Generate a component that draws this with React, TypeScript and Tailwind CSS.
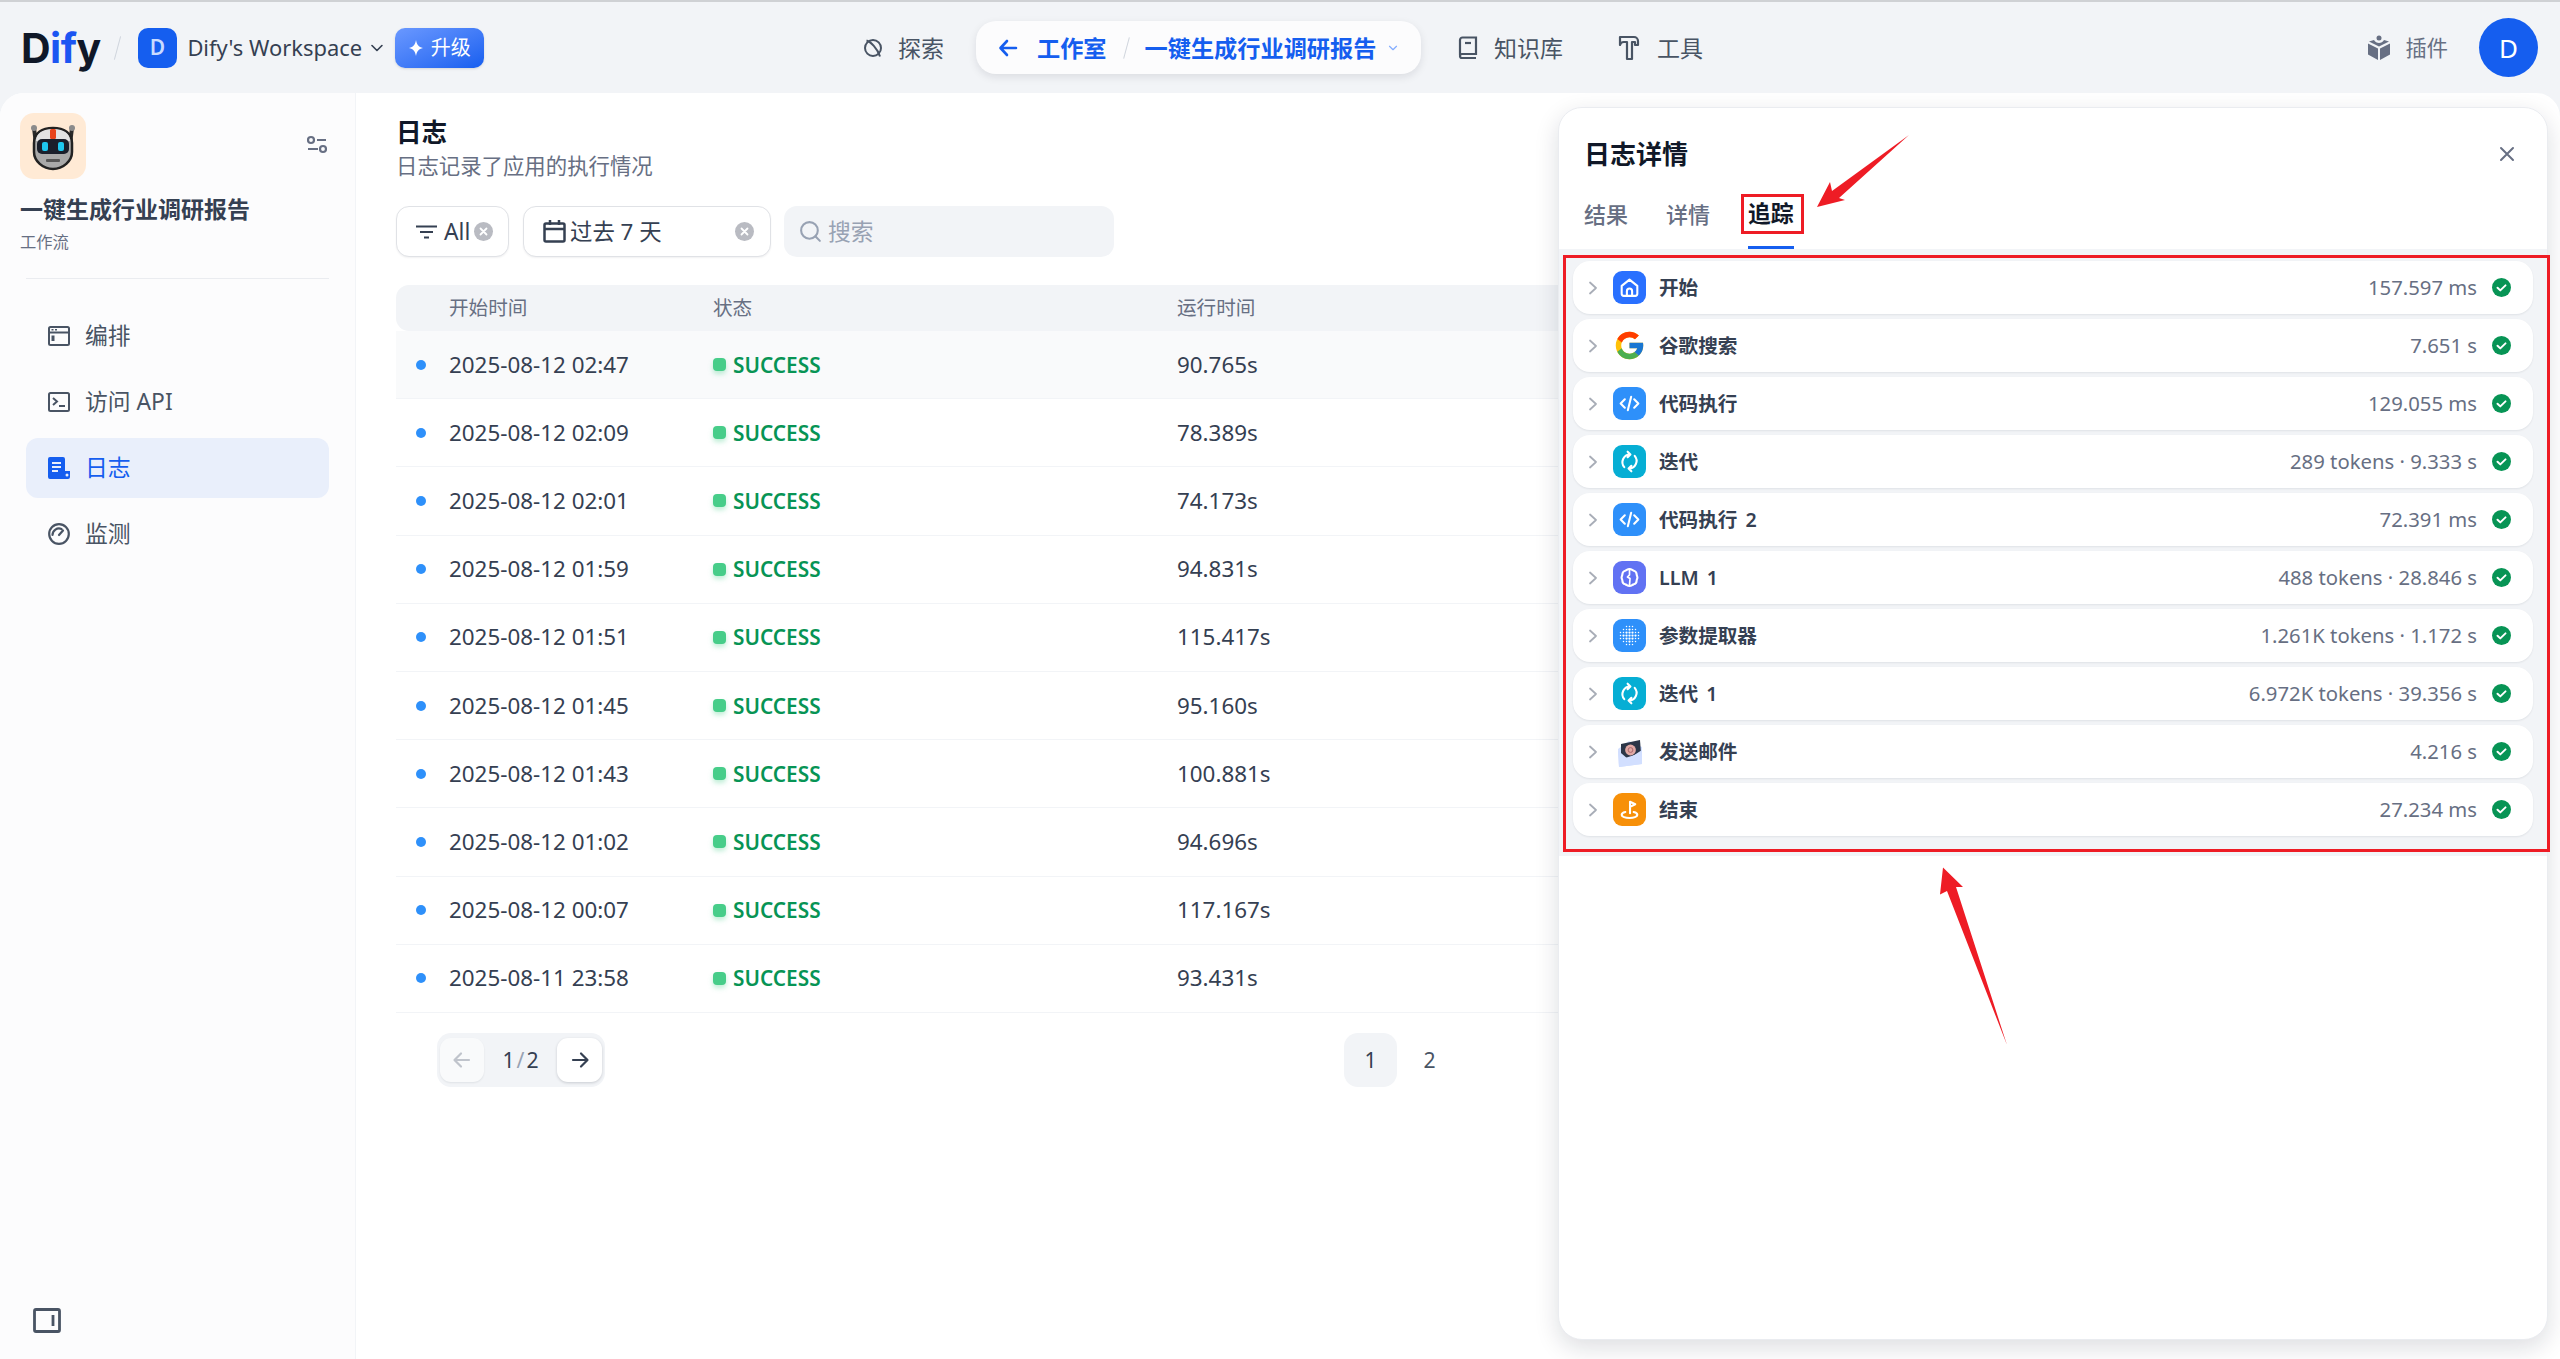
import React from "react";
import { FcGoogle } from "react-icons/fc";
import { Search, ChevronDown } from "lucide-react";

const logs = [
  ["2025-08-12 02:47", "90.765s"],
  ["2025-08-12 02:09", "78.389s"],
  ["2025-08-12 02:01", "74.173s"],
  ["2025-08-12 01:59", "94.831s"],
  ["2025-08-12 01:51", "115.417s"],
  ["2025-08-12 01:45", "95.160s"],
  ["2025-08-12 01:43", "100.881s"],
  ["2025-08-12 01:02", "94.696s"],
  ["2025-08-12 00:07", "117.167s"],
  ["2025-08-11 23:58", "93.431s"],
];

const IconBox = ({ cls, children }: { cls: string; children: React.ReactNode }) => (
  <div className={`flex h-[33px] w-[33px] shrink-0 items-center justify-center rounded-[9px] ${cls}`}>
    <svg width="25" height="25" viewBox="0 0 24 24" fill="none" stroke="#fff" strokeWidth="2" strokeLinecap="round" strokeLinejoin="round">
      {children}
    </svg>
  </div>
);

const CodeIcon = () => (
  <IconBox cls="bg-[#2e90fa]">
    <path d="M7.5 8 3.500 12l4 4M16.500 8l4 4-4 4M13.600 5.500l-3.200 13" />
  </IconBox>
);

const IterIcon = () => (
  <IconBox cls="bg-[#06aed4]">
    <path d="M12.500 5.200A7.400 7.400 0 0 0 7 17.400M10.200 2.600l2.700 2.600-2.700 2.700M11.500 18.800A7.400 7.400 0 0 0 17 6.600M13.800 21.400l-2.700-2.600 2.700-2.700" />
  </IconBox>
);

const dots: [number, number][] = [];
for (let y = -3; y <= 3; y++) {
  for (let x = -3; x <= 3; x++) {
    if (Math.abs(x) + Math.abs(y) <= 4) dots.push([x, y]);
  }
}

const MailIcon = () => (
  <svg width="33" height="33" viewBox="0 0 33 33" className="shrink-0">
    <path d="M5 14 16 6l13 6v17L6 32z" fill="#d2dfff" />
    <path d="M8 9 27 5l1 13-16 5-4-3z" fill="#2b3648" />
    <circle cx="17.500" cy="15" r="5.400" fill="#e0a8a4" />
    <circle cx="17.500" cy="15" r="2.400" fill="none" stroke="#a9666c" strokeWidth="1" />
    <path d="M5 15.500 15 24l14-9v14L6 32z" fill="#d2dfff" />
  </svg>
);

const traces: { name: string; meta: string; icon: React.ReactNode }[] = [
  {
    name: "开始",
    meta: "157.597 ms",
    icon: (
      <IconBox cls="bg-[#2970ff]">
        <path d="M4.500 10.500 12 4.500l7.500 6v7.500a2 2 0 0 1-2 2h-11a2 2 0 0 1-2-2zM9.500 20v-4.500a2.500 2.500 0 0 1 5 0V20" />
      </IconBox>
    ),
  },
  { name: "谷歌搜索", meta: "7.651 s", icon: <div className="flex h-[33px] w-[33px] shrink-0 items-center justify-center"><FcGoogle size={33} /></div> },
  { name: "代码执行", meta: "129.055 ms", icon: <CodeIcon /> },
  { name: "迭代", meta: "289 tokens · 9.333 s", icon: <IterIcon /> },
  { name: "代码执行 2", meta: "72.391 ms", icon: <CodeIcon /> },
  {
    name: "LLM 1",
    meta: "488 tokens · 28.846 s",
    icon: (
      <IconBox cls="bg-[#6172f3]">
        <path d="M12 3.800c2 0 2.600 1.200 4 1.600 1.600.5 2.800 1.600 2.800 3.300 0 1.300.8 2 .8 3.300s-.8 2-.8 3.300c0 1.700-1.200 2.800-2.800 3.300-1.400.4-2 1.600-4 1.600s-2.600-1.200-4-1.600c-1.600-.5-2.800-1.600-2.800-3.300 0-1.300-.8-2-.8-3.300s.8-2 .8-3.300c0-1.700 1.200-2.800 2.800-3.300 1.400-.4 2-1.600 4-1.600z" />
        <path d="M12 4v5.500l-2 2 2.500 1.500-.5 6.500" strokeWidth="1.600" />
      </IconBox>
    ),
  },
  {
    name: "参数提取器",
    meta: "1.261K tokens · 1.172 s",
    icon: (
      <div className="flex h-[33px] w-[33px] shrink-0 items-center justify-center rounded-[9px] bg-[#2e90fa]">
        <svg width="21" height="21" viewBox="-7 -7 14 14" fill="#fff">
          {dots.map(([x, y]) => (
            <circle key={`${x}-${y}`} cx={x * 2} cy={y * 2} r={Math.abs(x) + Math.abs(y) <= 2 ? 0.75 : 0.5} />
          ))}
        </svg>
      </div>
    ),
  },
  { name: "迭代 1", meta: "6.972K tokens · 39.356 s", icon: <IterIcon /> },
  { name: "发送邮件", meta: "4.216 s", icon: <MailIcon /> },
  {
    name: "结束",
    meta: "27.234 ms",
    icon: (
      <IconBox cls="bg-[#f79009]">
        <path d="M12.500 15.500V4.500l5 2.500-5 2.500M8 14.500c-2.200.5-3.500 1.500-3.500 2.700 0 1.700 3.400 3 7.500 3s7.500-1.300 7.500-3c0-1.200-1.300-2.200-3.500-2.700" />
      </IconBox>
    ),
  },
];

const ClearDot = () => (
  <span className="flex h-[19px] w-[19px] shrink-0 items-center justify-center rounded-full bg-[#b9bbc2]">
    <svg width="9" height="9" viewBox="0 0 9 9" stroke="#fff" strokeWidth="1.800" strokeLinecap="round">
      <path d="M1.500 1.500l6 6M7.500 1.500l-6 6" />
    </svg>
  </span>
);

const menuStroke = { fill: "none", stroke: "#495464", strokeWidth: 2 };

const menu: { label: string; active?: boolean; icon: React.ReactNode }[] = [
  {
    label: "编排",
    icon: (
      <svg width="22" height="20" viewBox="0 0 22 20" {...menuStroke}>
        <rect x="1" y="1" width="20" height="18" rx="1.500" />
        <path d="M1 6.500h20" />
        <path d="M3.500 3.700h2M7 3.700h2" strokeWidth="1.500" />
        <path d="M5 9.500v5.500" strokeWidth="3" />
      </svg>
    ),
  },
  {
    label: "访问 API",
    icon: (
      <svg width="22" height="20" viewBox="0 0 22 20" {...menuStroke}>
        <rect x="1" y="1" width="20" height="18" rx="1.500" />
        <path d="M5 6l4 3.500L5 13M11 14h6" />
      </svg>
    ),
  },
  {
    label: "日志",
    active: true,
    icon: (
      <svg width="22" height="22" viewBox="0 0 22 22">
        <path d="M2 0h13a2 2 0 0 1 2 2v12h5v6a2 2 0 0 1-2 2H2a2 2 0 0 1-2-2V2a2 2 0 0 1 2-2z" fill="#155eef" />
        <path d="M4 6h9M4 10h9M4 14h6" stroke="#e9effb" strokeWidth="1.800" />
        <circle cx="19" cy="18" r="1.500" fill="#e9effb" />
      </svg>
    ),
  },
  {
    label: "监测",
    icon: (
      <svg width="22" height="22" viewBox="0 0 22 22" {...menuStroke} strokeWidth="2.200">
        <circle cx="11" cy="11" r="9.800" />
        <path d="M4.500 12a6.500 6.500 0 0 1 9-6M11 12l4-4.500" strokeLinecap="round" />
      </svg>
    ),
  },
];

const Robot = () => (
  <svg width="66" height="66" viewBox="0 0 66 66">
    <path d="M14 15l2 16M52 15l-2 16" stroke="#2a2a2a" strokeWidth="4" strokeLinecap="round" />
    <circle cx="14" cy="15" r="3" fill="#8b8b8b" />
    <circle cx="52" cy="15" r="3" fill="#8b8b8b" />
    <path d="M14 30c0-10 8-15 19-15s19 5 19 15v9c0 9-9 17-19 17s-19-8-19-17z" fill="#a9a9a9" stroke="#222" strokeWidth="2.500" />
    <path d="M16 28c0-8 7-12 17-12s17 4 17 12z" fill="#e2e2e2" />
    <rect x="30" y="16" width="6" height="10" rx="1.500" fill="#e8431a" />
    <rect x="17" y="26" width="32" height="15" rx="5" fill="#1a1f2b" />
    <rect x="22" y="29" width="6" height="9" rx="2" fill="#1ec8ef" />
    <rect x="38" y="29" width="6" height="9" rx="2" fill="#1ec8ef" />
    <rect x="26" y="46" width="14" height="3" rx="1" fill="#555" />
  </svg>
);

export default function App() {
  return (
    <div className="relative flex h-[1359px] w-[2560px] flex-col overflow-hidden border-t-2 border-[#cfd1d4] bg-[#f2f4f7] font-['Noto_Sans','Noto_Sans_CJK_SC',sans-serif] text-[22.8px] text-[#354052]">
      {/* Top bar */}
      <header className="flex h-[91px] shrink-0 items-center">
        <div className="ml-[21px] flex w-[463px] items-center">
          <span className="w-[83px] whitespace-nowrap font-['Inter',sans-serif] text-[41px] leading-[46px] font-bold tracking-[-0.5px] text-[#101828]">
            D<span className="text-[#1c55f2]">if</span>y
          </span>
          <span className="ml-[13px] h-[24px] w-[1px] rotate-[15deg] bg-[#d0d5dd]" />
          <span className="ml-[20px] flex h-[40px] w-[40px] items-center justify-center rounded-[10px] bg-[#155eef] text-[21px] font-semibold leading-none text-[#c9dbff]">D</span>
          <span className="ml-[10px] w-[176px] whitespace-nowrap text-[21.9px] leading-[30px] text-[#354052]">Dify's Workspace</span>
          <ChevronDown size={20} color="#354052" className="ml-[4px]" />
          <div className="ml-[9px] flex h-[40px] w-[89px] items-center justify-center gap-[8px] rounded-[10px] bg-gradient-to-br from-[#6a98ff] to-[#155eef] shadow-sm">
            <svg width="14" height="18" viewBox="0 0 14 18" fill="#fff">
              <path d="M7 1c.8 4.600 2.400 7 7 8-4.600 1-6.200 3.400-7 8-.8-4.600-2.400-7-7-8 4.600-1 6.200-3.400 7-8z" />
            </svg>
            <span className="text-[20px] leading-none text-white">升级</span>
          </div>
        </div>
        <nav className="ml-[379px] flex w-[845px] items-center text-[23px] text-[#495464]">
          <svg width="20" height="22" viewBox="0 0 20 22" fill="none" stroke="#495464" strokeWidth="2">
            <circle cx="10" cy="11" r="8" />
            <path d="M3.500 3.500c4 1 11 8 13.500 16" />
          </svg>
          <span className="ml-[15px] leading-[30px]">探索</span>
          <div className="ml-[32px] flex h-[53px] w-[445px] items-center rounded-[20px] bg-[#fcfcfd] pl-[22px] text-[23.2px] text-[#155eef] shadow-[0_3px_8px_rgba(16,24,40,0.1)]">
            <svg width="20" height="20" viewBox="0 0 20 20" fill="none" stroke="#155eef" strokeWidth="2.600" strokeLinecap="round" strokeLinejoin="round">
              <path d="M9 3 2.500 10 9 17M3 10h15" />
            </svg>
            <span className="ml-[19px] leading-[30px] font-semibold">工作室</span>
            <span className="ml-[19px] h-[22px] w-[1px] rotate-[15deg] bg-[#d0d5dd]" />
            <span className="ml-[18px] leading-[30px] font-semibold">一键生成行业调研报告</span>
            <ChevronDown size={14} color="#84adff" className="ml-[10px]" />
          </div>
          <svg className="ml-[37px]" width="20" height="24" viewBox="0 0 20 24" fill="none" stroke="#495464" strokeWidth="2.200">
            <path d="M2 19V4a2.500 2.500 0 0 1 2.500-2.500H18V18H4a2 2 0 0 0-2 2 2 2 0 0 0 2 2h14" />
            <path d="M7 7h6" />
          </svg>
          <span className="ml-[16px] leading-[30px]">知识库</span>
          <svg className="ml-[55px]" width="22" height="26" viewBox="0 0 22 26" fill="none" stroke="#495464" strokeWidth="2.200" strokeLinejoin="round">
            <path d="M2 2h14a4 4 0 0 1 4 4v4h-3V7h-3v17H9V7H6a4 4 0 0 0-4 3z" />
          </svg>
          <span className="ml-[17px] leading-[30px]">工具</span>
        </nav>
        <div className="ml-auto mr-[22px] flex items-center">
          <svg width="22" height="25" viewBox="0 0 22 25" fill="#676f83">
            <circle cx="11" cy="3" r="2.500" />
            <path d="M1 6.500 6 5c1 2 3 3 5 3s4-1 5-3l5 1.500L11 11.500zM0 8.500l10 5V25L0 19.500zM22 8.500l-10 5V25l10-5.500z" />
          </svg>
          <span className="ml-[16px] text-[21.2px] leading-[30px] text-[#676f83]">插件</span>
          <span className="ml-[31px] flex h-[59px] w-[59px] items-center justify-center rounded-full bg-[#155eef] text-[26px] leading-none text-white">D</span>
        </div>
      </header>

      {/* Main panel */}
      <div className="relative flex min-h-0 flex-1 overflow-hidden rounded-t-[24px] bg-white">
        <aside className="flex w-[356px] shrink-0 flex-col border-r border-[#f2f4f7] bg-[#fcfcfd]">
          <div className="mt-[20px] ml-[20px] flex items-center justify-between pr-[27px]">
            <div className="h-[66px] w-[66px] overflow-hidden rounded-[14px] bg-[#ffead5]">
              <Robot />
            </div>
            <svg className="mb-[2px]" width="22" height="20" viewBox="0 0 22 20" fill="none" stroke="#676f83" strokeWidth="2.200">
              <circle cx="5" cy="5" r="3" />
              <path d="M11 5h9M2 14h10" />
              <circle cx="17" cy="14" r="3" />
            </svg>
          </div>
          <div className="mt-[15px] ml-[20px] text-[23px] leading-[30px] font-semibold text-[#354052]">一键生成行业调研报告</div>
          <div className="mt-[8px] ml-[20px] text-[16.3px] leading-[20px] text-[#676f83]">工作流</div>
          <div className="mx-[26px] mt-[26px] h-[1px] bg-[#eaecf0]" />
          <div className="mx-[26px] mt-[27px] flex flex-col gap-[6px]">
            {menu.map((m) => (
              <div
                key={m.label}
                className={`flex h-[60px] items-center gap-[15px] rounded-[12px] pl-[22px] ${m.active ? "bg-[#e9effb] text-[#155eef]" : "text-[#495464]"}`}
              >
                {m.icon}
                <span className="leading-[30px]">{m.label}</span>
              </div>
            ))}
          </div>
          <svg className="mt-auto mb-[26px] ml-[33px]" width="28" height="25" viewBox="0 0 28 25" fill="none" stroke="#495464" strokeWidth="2.800">
            <rect x="1.500" y="1.500" width="25" height="22" rx="1.500" />
            <path d="M20 7v11" />
          </svg>
        </aside>

        <main className="flex min-w-0 flex-1 flex-col pl-[40px] pr-[27px]">
          <h1 className="mt-[24px] text-[25.6px] leading-[32px] font-semibold text-[#101828]">日志</h1>
          <p className="mt-[3px] text-[21.4px] leading-[28px] text-[#676f83]">日志记录了应用的执行情况</p>
          <div className="mt-[26px] flex h-[51px] gap-[14px]">
            <div className="flex w-[113px] items-center rounded-[13px] border border-[#e0e2e6] bg-white pl-[19px] shadow-[0_1px_2px_rgba(16,24,40,0.06)]">
              <svg width="21" height="14" viewBox="0 0 21 14" stroke="#354052" strokeWidth="2.200">
                <path d="M0 1.500h21M4 7h13M8 12.500h5" />
              </svg>
              <span className="ml-[7px] leading-[30px]">All</span>
              <span className="ml-[4px]"><ClearDot /></span>
            </div>
            <div className="flex w-[248px] items-center rounded-[13px] border border-[#e0e2e6] bg-white pl-[19px] pr-[16px] shadow-[0_1px_2px_rgba(16,24,40,0.06)]">
              <svg width="23" height="23" viewBox="0 0 23 23" fill="none" stroke="#354052" strokeWidth="2.500">
                <rect x="1.500" y="3.500" width="20" height="18" rx="1.500" />
                <path d="M1.500 9h20M7 0v5M16 0v5" />
              </svg>
              <span className="ml-[4px] text-[22.4px] leading-[30px]">过去 7 天</span>
              <span className="ml-auto"><ClearDot /></span>
            </div>
            <div className="-ml-[1px] flex w-[330px] items-center rounded-[13px] bg-[#f2f4f7] pl-[14px] text-[#98a2b3]">
              <Search size={25} strokeWidth={2} color="#98a2b3" />
              <span className="ml-[5px] leading-[30px]">搜索</span>
            </div>
          </div>

          <div className="mt-[28px] flex flex-col">
            <div className="grid h-[46px] grid-cols-[53px_264px_464px_1fr] items-center rounded-[13px] bg-[#f2f4f7] text-[19.6px] text-[#676f83]">
              <span />
              <span className="leading-[26px]">开始时间</span>
              <span className="leading-[26px]">状态</span>
              <span className="leading-[26px]">运行时间</span>
            </div>
            {logs.map(([time, dur], i) => (
              <div
                key={time}
                className={`grid h-[68.2px] grid-cols-[53px_264px_464px_1fr] items-center border-b border-[#f2f4f7] text-[22.4px] ${i === 0 ? "bg-[#f9fafb]" : "bg-white"}`}
              >
                <span className="ml-[20px] h-[10px] w-[10px] rounded-full bg-[#2e90fa]" />
                <span className="leading-[30px]">{time}</span>
                <span className="flex items-center gap-[7px]">
                  <span className="h-[13px] w-[13px] rounded-[4px] bg-[#47cd89] shadow-[0_3px_5px_rgba(71,205,137,0.35)]" />
                  <span className="text-[20.8px] leading-[30px] font-semibold text-[#079455]">SUCCESS</span>
                </span>
                <span className="leading-[30px]">{dur}</span>
              </div>
            ))}
          </div>

          <div className="mt-[20px] flex">
            <div className="ml-[41px] flex h-[54px] w-[168px] items-center rounded-[14px] bg-[#f2f4f7] pl-[3px] pr-[3px]">
              <span className="flex h-[44px] w-[44px] items-center justify-center rounded-[11px] bg-[#f9fafb] shadow-[0_1px_2px_rgba(16,24,40,0.08)]">
                <svg width="20" height="20" viewBox="0 0 20 20" fill="none" stroke="#c0c4cc" strokeWidth="2.200" strokeLinecap="round" strokeLinejoin="round">
                  <path d="M9 3.500 2.500 10 9 16.500M3 10h14" />
                </svg>
              </span>
              <span className="flex-1 text-center text-[21.2px] leading-[30px]">1<span className="mx-[2px] text-[#98a2b3]">/</span>2</span>
              <span className="flex h-[44px] w-[45px] items-center justify-center rounded-[11px] bg-white shadow-[0_1px_3px_rgba(16,24,40,0.18)]">
                <svg width="20" height="20" viewBox="0 0 20 20" fill="none" stroke="#354052" strokeWidth="2.200" strokeLinecap="round" strokeLinejoin="round">
                  <path d="M11 3.500 17.500 10 11 16.500M3 10h14" />
                </svg>
              </span>
            </div>
            <span className="ml-[739px] flex h-[54px] w-[53px] items-center justify-center rounded-[14px] bg-[#f2f4f7] text-[21.2px]">1</span>
            <span className="ml-[6px] flex h-[54px] w-[53px] items-center justify-center text-[21.2px] text-[#495464]">2</span>
          </div>
        </main>

        {/* Drawer */}
        <section className="absolute top-[14px] right-[12px] bottom-[19px] flex w-[990px] flex-col overflow-hidden rounded-[24px] border border-[#eaecf0] bg-white shadow-[0_8px_24px_rgba(16,24,40,0.14)]">
          <div className="flex shrink-0 items-center justify-between pt-[29px] pl-[25px] pr-[32px]">
            <h2 className="text-[26px] leading-[34px] font-semibold text-[#101828]">日志详情</h2>
            <svg width="16" height="16" viewBox="0 0 16 16" stroke="#676f83" strokeWidth="2" strokeLinecap="round">
              <path d="M2 2l12 12M14 2 2 14" />
            </svg>
          </div>
          <div className="mt-[27px] flex shrink-0 gap-[38px] pl-[25px] text-[22px] font-medium">
            <span className="pb-[19px] leading-[32px] text-[#676f83]">结果</span>
            <span className="pb-[19px] leading-[32px] text-[#676f83]">详情</span>
            <span className="border-b-[3px] border-[#155eef] pb-[16px] text-[22.8px] leading-[32px] font-semibold text-[#101828]">追踪</span>
          </div>
          <div className="flex shrink-0 flex-col gap-[5px] bg-[#f2f4f7] pt-[12px] pr-[14px] pb-[20px] pl-[14px]">
            {traces.map((t) => (
              <div key={t.name} className="flex h-[53.05px] items-center rounded-[17px] bg-white pl-[15px] pr-[22px] shadow-[0_1px_2px_rgba(16,24,40,0.08)]">
                <svg width="10" height="14" viewBox="0 0 10 14" fill="none" stroke="#a8adb7" strokeWidth="1.800" strokeLinecap="round" strokeLinejoin="round">
                  <path d="M2 1.500 8 7l-6 5.500" />
                </svg>
                <span className="ml-[15px]">{t.icon}</span>
                <span className="ml-[13px] text-[19.6px] leading-[26px] font-semibold text-[#354052] [word-spacing:3px]">{t.name}</span>
                <span className="ml-auto pb-[2px] text-[20.3px] leading-[26px] text-[#676f83]">{t.meta}</span>
                <svg className="ml-[15px] shrink-0" width="19" height="19" viewBox="0 0 19 19">
                  <circle cx="9.500" cy="9.500" r="9.500" fill="#079455" />
                  <path d="M5.500 9.700l2.800 2.700 5.200-5" fill="none" stroke="#fff" strokeWidth="2" strokeLinecap="round" strokeLinejoin="round" />
                </svg>
              </div>
            ))}
          </div>
        </section>
      </div>

      {/* Hand-drawn red annotations */}
      <svg className="pointer-events-none absolute top-[-2px] left-0" width="2560" height="1359" viewBox="0 0 2560 1359" fill="none">
        <rect x="1742.500" y="195.500" width="60" height="37" stroke="#ee1c25" strokeWidth="3" />
        <rect x="1564.500" y="256.500" width="984" height="594" stroke="#ee1c25" strokeWidth="3" />
        <polygon points="1817,207 1830,182 1832,191 1909,135 1839,198 1845,200" fill="#ee1c25" />
        <polygon points="1943,867.500 1963,887 1956,887 2007,1045 1947,891 1940,894.500" fill="#ee1c25" />
      </svg>
    </div>
  );
}
